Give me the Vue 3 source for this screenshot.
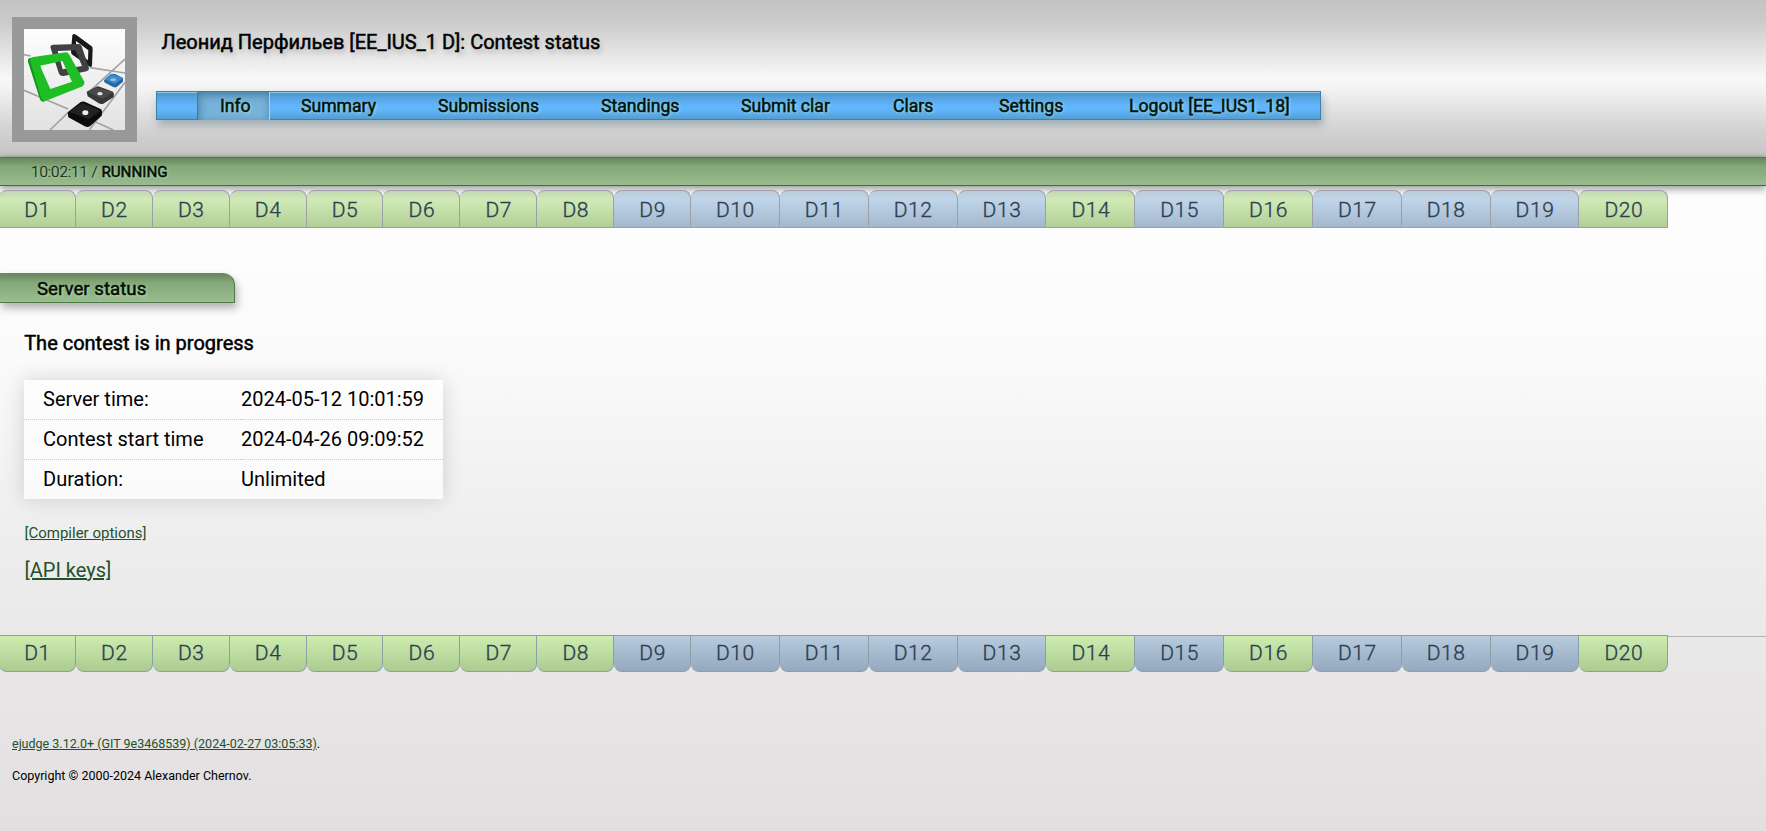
<script setup>
const menu = ['Info', 'Summary', 'Submissions', 'Standings', 'Submit clar', 'Clars', 'Settings', 'Logout [EE_IUS1_18]']
const solved = [1, 2, 3, 4, 5, 6, 7, 8, 14, 16, 20]
const problems = Array.from({ length: 20 }, (_, i) => ({
  name: `D${i + 1}`,
  wide: i > 8,
  ok: solved.includes(i + 1)
}))
const info = [
  ['Server time:', '2024-05-12 10:01:59'],
  ['Contest start time', '2024-04-26 09:09:52'],
  ['Duration:', 'Unlimited']
]
</script>

<template>
  <div class="page">
    <header class="header">
      <div class="logo">
        <svg viewBox="0 0 303 303" width="101" height="101">
          <defs>
            <linearGradient id="floor" x1="0" y1="0" x2="0" y2="1">
              <stop offset="0" stop-color="#fdfdfd" />
              <stop offset="0.5" stop-color="#f0f0f0" />
              <stop offset="1" stop-color="#e2e2e2" />
            </linearGradient>
          </defs>
          <rect width="303" height="303" fill="url(#floor)" />
          <g stroke="#a3a3a3" stroke-width="5" fill="none">
            <path d="M0 77 L20 81 M198 116 L303 132 M0 184 L132 240 M200 272 L268 303 M78 303 L132 251 M190 193 L303 90 M196 303 L303 160" />
          </g>
          <path fill="#191919" fill-rule="evenodd" d="M145 19 Q148 12 156 17 L202 51 Q206 53 206 60 L204 110 Q201 117 194 111 L145 77 Q140 74 141 65 Z M156 36 L156 66 L192 94 L193 64 Z" />
          <path fill="#414042" fill-rule="evenodd" d="M79 55 Q79 48 87 47 L163 45 Q170 45 173 52 L195 117 Q196 124 188 127 L119 141 Q109 142 105 134 Z M101 66 L116 121 L174 111 L154 64 Z" />
          <path fill="#15921a" d="M12 98 Q10 88 20 86 L44 93 L75 205 L60 218 Q51 220 48 211 Z" />
          <path fill="#1fbe25" fill-rule="evenodd" d="M18 94 Q17 86 29 84 L125 70 Q132 70 136 77 L181 158 Q183 166 176 172 L66 215 Q54 219 51 207 Z M48 110 L79 180 L144 158 L115 96 Z" />
          <path fill="#34383a" d="M188 188 L217 173 Q221 171 227 173 L267 188 Q271 192 269 204 L238 224 Q230 227 223 222 L191 202 Z" />
          <path fill="#4a4a4a" d="M191 188 L218 175 L266 190 L235 210 Z" />
          <path fill="#0b0b0b" d="M131 250 L170 219 Q176 216 182 218 L230 240 Q236 243 233 260 L198 292 Q190 296 181 291 L133 265 Z" />
          <path fill="#222" d="M136 248 L174 221 L230 245 L194 271 Z" />
          <path fill="#2366a4" d="M240 154 L259 136 Q267 132 275 136 L297 147 L297 158 L278 174 Q271 177 263 172 L241 160 Z" />
          <path fill="#3d8dcc" d="M241 151 L262 135 L297 147 L273 165 Z" />
          <ellipse cx="228" cy="194" rx="8" ry="5" fill="#e6e6e6" />
          <ellipse cx="184" cy="251" rx="9" ry="7" fill="#ececec" />
          <ellipse cx="268" cy="152" rx="9" ry="4" fill="#8fc0e4" />
        </svg>
      </div>
      <div class="head-main">
        <h1 class="title faux">Леонид Перфильев [EE_IUS_1 D]: Contest status</h1>
        <nav class="menu">
          <a v-for="(m, i) in menu" :key="m" class="item faux" :class="{ active: i === 0 }">{{ m }}</a>
        </nav>
      </div>
    </header>

    <div class="status"><span>10:02:11 / <b class="faux">RUNNING</b></span></div>

    <div class="tabs top">
      <a v-for="p in problems" :key="p.name" class="tab" :class="{ wide: p.wide, ok: p.ok }">{{ p.name }}</a>
    </div>

    <main class="content">
      <h2 class="section faux">Server status</h2>
      <p class="progress faux">The contest is in progress</p>
      <table class="info">
        <tbody>
          <tr v-for="row in info" :key="row[0]">
            <td class="label">{{ row[0] }}</td>
            <td>{{ row[1] }}</td>
          </tr>
        </tbody>
      </table>
      <a class="link small">[Compiler options]</a>
      <a class="link">[API keys]</a>
    </main>

    <div class="tabs bottom">
      <a v-for="p in problems" :key="p.name" class="tab" :class="{ wide: p.wide, ok: p.ok }">{{ p.name }}</a>
    </div>

    <footer class="footer">
      <p><a class="link">ejudge 3.12.0+ (GIT 9e3468539) (2024-02-27 03:05:33)</a>.</p>
      <p>Copyright © 2000-2024 Alexander Chernov.</p>
    </footer>
  </div>
</template>

<style>
body {
  margin: 0;
  overflow: hidden;
}
</style>

<style scoped>
.page {
  box-sizing: border-box;
  height: 831px;
  overflow: hidden;
  font-family: Roboto, "Liberation Sans", sans-serif;
  color: #000;
  background: linear-gradient(#fff 0, #fdfdfd 245px, #fafafa 360px, #efeeee 530px, #e8e6e7 680px, #e1dfe0 831px);
}
.faux {
  font-weight: 400;
  -webkit-text-stroke: 0.5px currentColor;
}
.header {
  box-sizing: border-box;
  display: flex;
  height: 157px;
  padding: 17px 0 0 12px;
  background: linear-gradient(#c3c3c3 0, #cbcbcb 22px, #f8f8f8 78px, #f4f4f4 88px, #d2d2d2 130px, #c5c5c5 157px);
}
.logo {
  box-sizing: border-box;
  width: 125px;
  height: 125px;
  padding: 12px;
  background: #999;
}
.logo svg {
  display: block;
}
.head-main {
  margin-left: 19px;
}
.title {
  margin: 12px 0 0 5.5px;
  height: 24px;
  line-height: 26px;
  font-size: 20px;
  white-space: nowrap;
  text-shadow: 2px 4px 5px rgba(0, 0, 0, 0.2);
}
.menu {
  box-sizing: border-box;
  display: grid;
  grid-template-columns: 73px 168px 163px 140px 152px 106px 130px 1fr;
  width: 1165px;
  height: 29px;
  margin-top: 38px;
  padding-left: 40px;
  border: 1px solid #3f82a8;
  background: linear-gradient(#4b95c8 0, #62b5fb 13px, #62b5fb 18px, #509ed4 27px);
  box-shadow: inset 0 1px 0 #8fc4e2, 2px 5px 8px rgba(50, 90, 110, 0.35);
}
.item {
  box-sizing: border-box;
  font-size: 17.6px;
  line-height: 28px;
  white-space: nowrap;
  color: #001408;
  text-shadow: 1px 1px 3px rgba(210, 240, 210, 0.7);
}
.item:nth-child(2) {
  padding-left: 31px;
}
.active {
  padding-left: 22px;
  border-left: 1px solid #397ca8;
  border-right: 1px solid #a5d3ef;
  background: #77b2da;
  box-shadow: inset 1px 3px 8px #487c9f;
}
.status {
  box-sizing: border-box;
  position: relative;
  height: 29px;
  padding-left: 31px;
  border-top: 1px solid #54794f;
  border-bottom: 1px solid #426a43;
  font-size: 15.2px;
  line-height: 28px;
  color: #0a1e0a;
  background: linear-gradient(#67865d 0, #86a97b 9px, #8caf81 16px, #9abe8f 28px);
  box-shadow: 0 3px 8px rgba(0, 0, 0, 0.4), 0 -1px 2px rgba(120, 160, 110, 0.5);
  text-shadow: 1px 1px 3px rgba(210, 235, 200, 0.7);
}
.status span {
  font-weight: 300;
  -webkit-text-stroke: 0.2px currentColor;
}
.status b {
  color: #000f00;
}
.tabs {
  display: flex;
  margin-left: -1px;
}
.top {
  position: relative;
  margin-top: 4px;
}
.tab {
  box-sizing: border-box;
  flex: none;
  width: 76.9px;
  height: 38px;
  padding-left: 1px;
  border: 1px solid #9a9fa8;
  border-left: 0;
  border-radius: 8px 8px 0 0;
  font-size: 21px;
  font-weight: 300;
  line-height: 38px;
  letter-spacing: 0.6px;
  text-align: center;
  color: #2c3e50;
  -webkit-text-stroke: 0.35px currentColor;
  background: linear-gradient(#bccbd8 0, #bfd5ea 8px, #bbcfe4 14px, #a3b7cd 100%);
}
.tab.wide {
  width: 88.85px;
}
.tab.ok {
  background: linear-gradient(#c4d6b4 0, #cfeab5 8px, #cbe5b0 14px, #b1cf96 100%);
}
.bottom {
  height: 38px;
}
.bottom .tab {
  height: 37px;
  line-height: 35px;
  border-color: #8aa0a5;
  border-radius: 0 0 8px 8px;
  background: linear-gradient(#b7ccde, #94a8bf);
}
.bottom .tab.ok {
  background: linear-gradient(#cdedb0, #abcb90);
}
.bottom::after {
  content: "";
  flex: 1;
  height: 1px;
  margin-top: 1px;
  background: #b4b4b7;
}
.content {
  display: flex;
  flex-direction: column;
  align-items: flex-start;
  height: 407px;
}
.section {
  box-sizing: border-box;
  width: 235px;
  height: 30px;
  margin: 45px 0 0;
  padding-left: 37px;
  border: 1px solid #4e7a4c;
  border-left: 0;
  border-top-color: #6d8c66;
  border-radius: 0 12px 0 0;
  font-size: 18.7px;
  line-height: 30px;
  color: #000f00;
  background: linear-gradient(#67865d 0, #86a97b 9px, #8caf81 16px, #9abe8f 28px);
  box-shadow: 2px 5px 8px rgba(0, 0, 0, 0.3);
  text-shadow: 1px 1px 3px rgba(220, 240, 210, 0.8);
}
.progress {
  height: 24px;
  margin: 28px 0 0 24.2px;
  font-size: 20px;
  line-height: 24px;
}
.info {
  width: 419px;
  margin: 25px 0 0 24px;
  border-collapse: separate;
  border-spacing: 0;
  font-size: 20px;
  background: rgba(255, 255, 255, 0.65);
  box-shadow: 0 0 20px rgba(0, 0, 0, 0.15);
}
.info td {
  box-sizing: border-box;
  height: 40px;
  padding: 0 0 2px;
  white-space: nowrap;
  border-bottom: 1px dotted #ccc;
}
.info tr:last-child td {
  height: 39px;
  border-bottom: 0;
}
.info .label {
  width: 217px;
  padding-left: 19px;
}
.link {
  color: #24512c;
  text-decoration: underline;
}
.content .link {
  height: 24px;
  margin: 15px 0 0 24.5px;
  font-size: 20px;
  line-height: 24px;
}
.content .link.small {
  height: 20px;
  margin-top: 24px;
  font-size: 15px;
  line-height: 20px;
}
.footer {
  padding: 61px 0 0 12px;
  font-size: 12.5px;
}
.footer p {
  height: 20px;
  margin: 0 0 12px;
  line-height: 20px;
}
</style>
